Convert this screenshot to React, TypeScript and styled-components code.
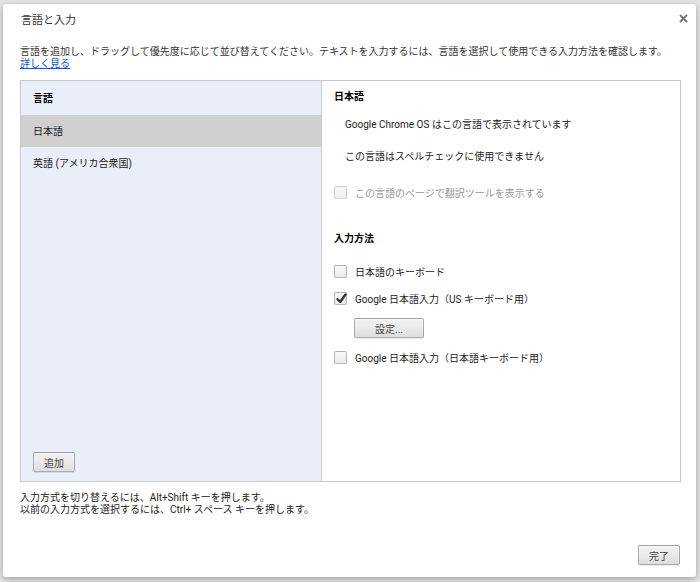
import React from "react";
import styled, { createGlobalStyle, css } from "styled-components";

const GlobalStyle = createGlobalStyle`
  html, body {
    margin: 0;
    padding: 0;
    background: #e4e4e4;
  }
  body {
    font-family: Roboto, "Noto Sans CJK JP", sans-serif;
    font-size: 10px;
    color: #333;
  }
`;

const Backdrop = styled.div`
  width: 700px;
  height: 582px;
  box-sizing: border-box;
  padding: 4px 0 0 3px;
  background: #e4e4e4;
  overflow: hidden;
`;

const Dialog = styled.div`
  width: 693px;
  height: 573px;
  box-sizing: border-box;
  background: #fff;
  border-radius: 3px;
  box-shadow: 0 2px 6px rgba(0, 0, 0, 0.3);
  padding: 10px 15px 12px 17px;
  display: flex;
  flex-direction: column;
`;

const TitleRow = styled.div`
  display: flex;
  justify-content: space-between;
  align-items: flex-start;
  height: 14px;
`;

const Title = styled.div`
  font-size: 11px;
  line-height: 14px;
  color: #333;
  padding-left: 1px;
`;

const CloseButton = styled.div`
  width: 9px;
  height: 9px;
  margin-right: -7px;
  display: flex;
`;

const Description = styled.div`
  margin-top: 18px;
  line-height: 12px;
  color: #333;
  white-space: nowrap;
`;

const Link = styled.a`
  display: block;
  color: #15c;
  text-decoration: underline;
`;

const Panel = styled.div`
  margin-top: 10px;
  width: 661px;
  height: 402px;
  box-sizing: border-box;
  border: 1px solid #c8c8c8;
  display: grid;
  grid-template-columns: 301px 1fr;
`;

const LeftPane = styled.div`
  background: #e9eef8;
  border-right: 1px solid #c8c8c8;
  display: flex;
  flex-direction: column;
`;

const PaneHeader = styled.div`
  height: 34px;
  box-sizing: border-box;
  padding: 0 0 2px 12px;
  display: flex;
  align-items: center;
  font-weight: bold;
  color: #000;
`;

const LangRow = styled.div<{ $selected?: boolean }>`
  height: 32px;
  box-sizing: border-box;
  padding: 0 0 2px 12px;
  display: flex;
  align-items: center;
  color: #222;
  ${(p) =>
    p.$selected &&
    css`
      background: #d0d0d0;
    `}
`;

const Spacer = styled.div`
  flex: 1;
`;

const Button = styled.button<{ $width: number }>`
  width: ${(p) => p.$width}px;
  height: 20px;
  box-sizing: border-box;
  padding: 0;
  border: 1px solid rgba(0, 0, 0, 0.28);
  border-radius: 2px;
  background: linear-gradient(#efefef, #ededed 38%, #dcdcdc);
  box-shadow: 0 1px 0 rgba(0, 0, 0, 0.08), inset 0 1px 2px rgba(255, 255, 255, 0.75);
  font-family: Roboto, "Noto Sans CJK JP", sans-serif;
  font-size: 10px;
  color: #444;
  display: flex;
  align-items: center;
  justify-content: center;
`;

const AddButtonWrap = styled.div`
  padding: 0 0 9px 12px;
`;

const RightPane = styled.div`
  padding: 0 12px;
  display: flex;
  flex-direction: column;
`;

const SectionHeader = styled.div<{ $top: number }>`
  margin-top: ${(p) => p.$top}px;
  height: 14px;
  line-height: 14px;
  font-weight: bold;
  color: #000;
`;

const InfoLine = styled.div<{ $top: number }>`
  margin-top: ${(p) => p.$top}px;
  padding-left: 11px;
  line-height: 12px;
  color: #222;
`;

const CheckRow = styled.label<{ $top: number; $disabled?: boolean }>`
  margin-top: ${(p) => p.$top}px;
  height: 13px;
  display: flex;
  align-items: center;
  gap: 8px;
  color: ${(p) => (p.$disabled ? "#999" : "#222")};
`;

const Box = styled.span<{ $disabled?: boolean }>`
  width: 13px;
  height: 13px;
  box-sizing: border-box;
  border: 1px solid ${(p) => (p.$disabled ? "rgba(0,0,0,0.15)" : "rgba(0,0,0,0.25)")};
  border-radius: 2px;
  background: ${(p) =>
    p.$disabled ? "linear-gradient(#f8f8f8, #f0f0f0)" : "linear-gradient(#f7f7f7, #ebebeb)"};
  position: relative;
  flex: none;
`;

const CheckMark = styled.svg`
  position: absolute;
  left: 0px;
  top: -2px;
`;

const SettingsWrap = styled.div`
  margin-top: 13px;
  padding-left: 20px;
`;

const Footer = styled.div`
  margin-top: 10px;
  line-height: 12px;
  color: #222;
`;

const ButtonBar = styled.div`
  display: flex;
  justify-content: flex-end;
  margin-top: auto;
  padding-right: 1px;
`;

function Checkbox({
  label,
  checked,
  disabled,
  top,
}: {
  label: string;
  checked?: boolean;
  disabled?: boolean;
  top: number;
}) {
  return (
    <CheckRow $top={top} $disabled={disabled}>
      <Box $disabled={disabled}>
        {checked && (
          <CheckMark width="13" height="14" viewBox="0 0 13 14">
            <path
              d="M2.5 8.2 L5.2 11 L10.5 3.5"
              fill="none"
              stroke="#333"
              strokeWidth="2.4"
              strokeLinecap="round"
              strokeLinejoin="round"
            />
          </CheckMark>
        )}
      </Box>
      <span>{label}</span>
    </CheckRow>
  );
}

export default function App() {
  return (
    <>
      <GlobalStyle />
      <Backdrop>
        <Dialog>
          <TitleRow>
            <Title>言語と入力</Title>
            <CloseButton>
              <svg width="9" height="9" viewBox="0 0 9 9">
                <path d="M1 1 L8 8 M8 1 L1 8" stroke="#777" strokeWidth="2" />
              </svg>
            </CloseButton>
          </TitleRow>
          <Description>
            言語を追加し、ドラッグして優先度に応じて並び替えてください。テキストを入力するには、言語を選択して使用できる入力方法を確認します。
            <Link href="#">詳しく見る</Link>
          </Description>
          <Panel>
            <LeftPane>
              <PaneHeader>言語</PaneHeader>
              <LangRow $selected>日本語</LangRow>
              <LangRow>英語 (アメリカ合衆国)</LangRow>
              <Spacer />
              <AddButtonWrap>
                <Button $width={42}>追加</Button>
              </AddButtonWrap>
            </LeftPane>
            <RightPane>
              <SectionHeader $top={9}>日本語</SectionHeader>
              <InfoLine $top={15}>Google Chrome OS はこの言語で表示されています</InfoLine>
              <InfoLine $top={20}>この言語はスペルチェックに使用できません</InfoLine>
              <Checkbox top={23} disabled label="この言語のページで翻訳ツールを表示する" />
              <SectionHeader $top={33}>入力方法</SectionHeader>
              <Checkbox top={19} label="日本語のキーボード" />
              <Checkbox top={14} checked label="Google 日本語入力（US キーボード用）" />
              <SettingsWrap>
                <Button $width={70}>設定...</Button>
              </SettingsWrap>
              <Checkbox top={13} label="Google 日本語入力（日本語キーボード用）" />
            </RightPane>
          </Panel>
          <Footer>
            入力方式を切り替えるには、Alt+Shift キーを押します。
            <br />
            以前の入力方式を選択するには、Ctrl+ スペース キーを押します。
          </Footer>
          <ButtonBar>
            <Button $width={42}>完了</Button>
          </ButtonBar>
        </Dialog>
      </Backdrop>
    </>
  );
}
